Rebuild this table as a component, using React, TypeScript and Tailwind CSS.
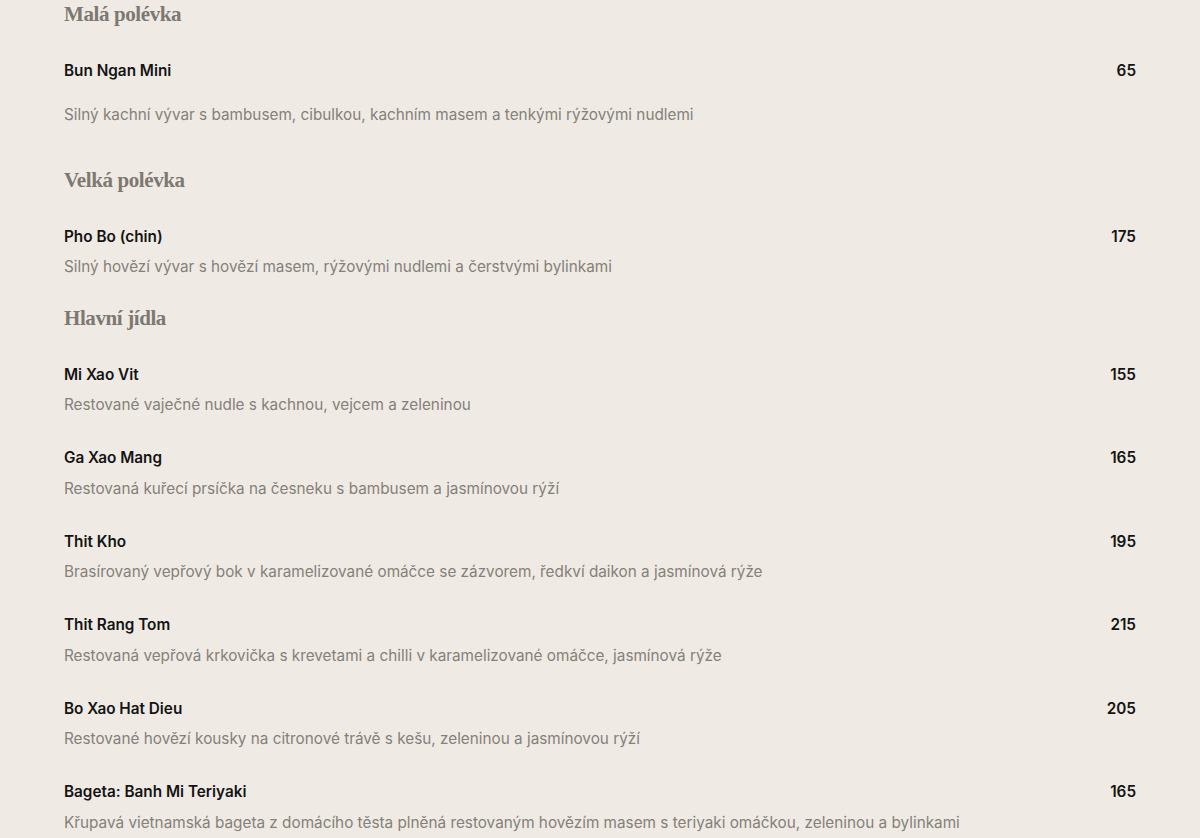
const sections = [
  {
    title: "Malá polévka",
    gapTop: "",
    items: [
      {
        name: "Bun Ngan Mini",
        price: "65",
        desc: "Silný kachní vývar s bambusem, cibulkou, kachním masem a tenkými rýžovými nudlemi",
        wide: true,
      },
    ],
  },
  {
    title: "Velká polévka",
    gapTop: "mt-[39px]",
    items: [
      {
        name: "Pho Bo (chin)",
        price: "175",
        desc: "Silný hovězí vývar s hovězí masem, rýžovými nudlemi a čerstvými bylinkami",
      },
    ],
  },
  {
    title: "Hlavní jídla",
    gapTop: "mt-[25px]",
    items: [
      { name: "Mi Xao Vit", price: "155", desc: "Restované vaječné nudle s kachnou, vejcem a zeleninou" },
      { name: "Ga Xao Mang", price: "165", desc: "Restovaná kuřecí prsíčka na česneku s bambusem a jasmínovou rýží" },
      { name: "Thit Kho", price: "195", desc: "Brasírovaný vepřový bok v karamelizované omáčce se zázvorem, ředkví daikon a jasmínová rýže" },
      { name: "Thit Rang Tom", price: "215", desc: "Restovaná vepřová krkovička s krevetami a chilli v karamelizované omáčce, jasmínová rýže" },
      { name: "Bo Xao Hat Dieu", price: "205", desc: "Restované hovězí kousky na citronové trávě s kešu, zeleninou a jasmínovou rýží" },
      { name: "Bageta: Banh Mi Teriyaki", price: "165", desc: "Křupavá vietnamská bageta z domácího těsta plněná restovaným hovězím masem s teriyaki omáčkou, zeleninou a bylinkami" },
    ],
  },
];

type Item = { name: string; price: string; desc: string; wide?: boolean };

function MenuItem({ item }: { item: Item }) {
  return (
    <div className="flex flex-col">
      <div className="flex justify-between items-center h-6 text-[15.3px] font-semibold text-[#141414]">
        <span>{item.name}</span>
        <span>{item.price}</span>
      </div>
      <p className={`${item.wide ? "mt-5" : "mt-[6px]"} h-6 leading-6 text-[15.3px] text-[#85807a]`}>
        {item.desc}
      </p>
    </div>
  );
}

export default function App() {
  return (
    <div
      className="min-h-screen w-full bg-[#efebe4] px-16 overflow-hidden flex flex-col"
      style={{ fontFamily: '"Inter", "Liberation Sans", sans-serif' }}
    >
      {sections.map((s) => (
        <section key={s.title} className={`flex flex-col ${s.gapTop}`}>
          <h2
            className="h-7 leading-7 text-[21px] font-bold text-[#7d7871] mb-[31px] tracking-[-0.4px]"
            style={{ fontFamily: '"Liberation Serif", serif' }}
          >
            {s.title}
          </h2>
          <div className="flex flex-col gap-[29.5px]">
            {s.items.map((it) => (
              <MenuItem key={it.name} item={it} />
            ))}
          </div>
        </section>
      ))}
    </div>
  );
}
